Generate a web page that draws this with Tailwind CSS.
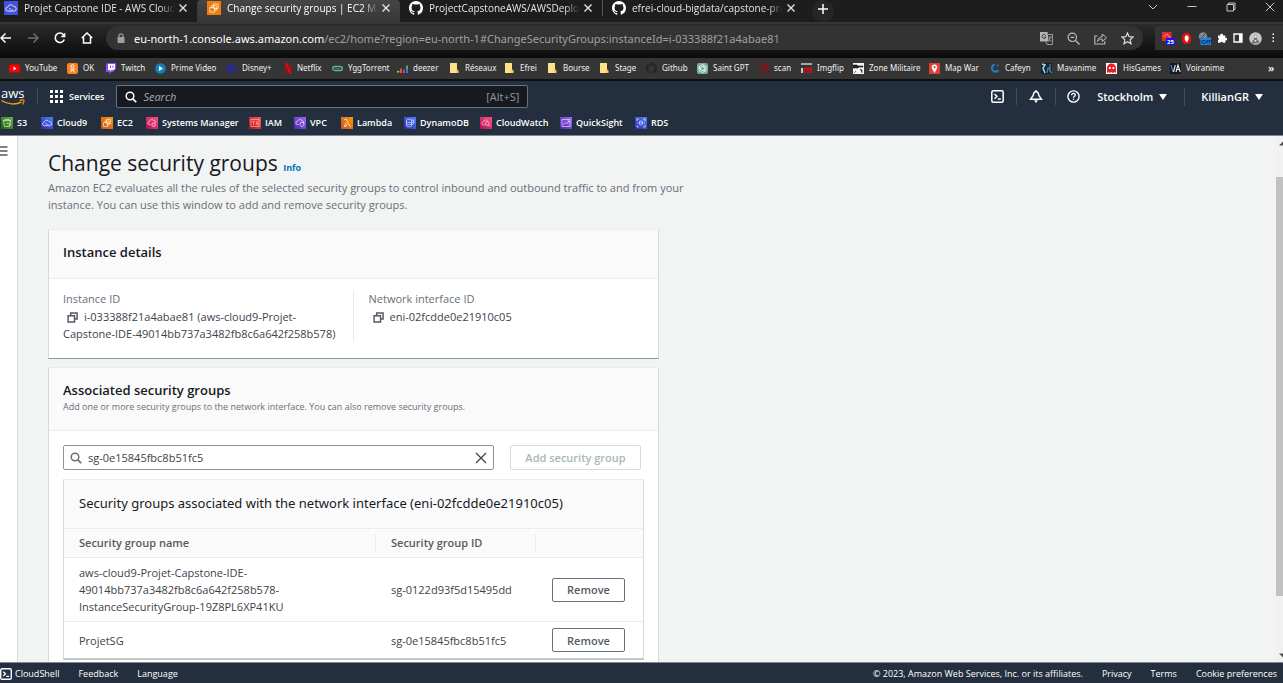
<!DOCTYPE html>
<html lang="en">
<head>
<meta charset="utf-8">
<meta name="viewport" content="width=device-width, initial-scale=1">
<title>Change security groups | EC2 Management Console</title>
<script src="https://cdn.jsdelivr.net/npm/@tailwindcss/browser@4"></script>
</head>
<body class="flex h-screen flex-col overflow-hidden bg-[#f2f3f3] font-['Open_Sans',sans-serif] text-[11px] leading-[17px] text-[#3c434b]">

<svg class="hidden" aria-hidden="true">
  <symbol id="x" viewBox="0 0 10 10"><path d="M1.5 1.5l7 7m0-7l-7 7" fill="none" stroke="currentColor" stroke-width="1.4"/></symbol>
  <symbol id="github" viewBox="0 0 16 16"><path fill="currentColor" d="M8 0C3.58 0 0 3.58 0 8c0 3.54 2.29 6.53 5.47 7.59.4.07.55-.17.55-.38 0-.19-.01-.82-.01-1.49-2.01.37-2.53-.49-2.69-.94-.09-.23-.48-.94-.82-1.13-.28-.15-.68-.52-.01-.53.63-.01 1.08.58 1.23.82.72 1.21 1.87.87 2.33.66.07-.52.28-.87.51-1.07-1.78-.2-3.64-.89-3.64-3.95 0-.87.31-1.59.82-2.15-.08-.2-.36-1.02.08-2.12 0 0 .67-.21 2.2.82.64-.18 1.32-.27 2-.27s1.36.09 2 .27c1.53-1.04 2.2-.82 2.2-.82.44 1.1.16 1.92.08 2.12.51.56.82 1.27.82 2.15 0 3.07-1.87 3.75-3.65 3.95.29.25.54.73.54 1.48 0 1.07-.01 1.93-.01 2.2 0 .21.15.46.55.38A8.01 8.01 0 0 0 16 8c0-4.42-3.58-8-8-8z"/></symbol>
  <symbol id="cloud9" viewBox="0 0 12 12"><path d="M3.3 8.7a1.7 1.7 0 0 1-.1-3.4A2.7 2.7 0 0 1 8.2 4.6 A2 2 0 0 1 8.7 8.7zM4.5 6l1 1-1 .9M6.2 7.7h1.3" fill="none" stroke="#fff" stroke-opacity=".85" stroke-width=".8"/></symbol>
  <symbol id="ec2" viewBox="0 0 12 12"><path d="M5.5 2.5h4v4h-4zM2.5 5.5h4v4h-4zM4 5.500V4h4v4H6.500" fill="none" stroke="#fff" stroke-opacity=".85" stroke-width=".7"/></symbol>
  <symbol id="folder" viewBox="0 0 10 10"><path d="M1 0h7v6.500l1.300 1V10H1z" fill="#ffe08a"/><path d="M7 10V8l1-1.500L9.300 7.500V10z" fill="#f2c94c"/></symbol>
  <symbol id="copy" viewBox="0 0 12 12"><path d="M4 3.500V1.200h7v6.500H8.700M1.200 4h7v7H1.200z" fill="none" stroke="currentColor" stroke-width="1.600"/></symbol>
  <symbol id="glass" viewBox="0 0 12 12"><circle cx="5" cy="5" r="3.800" fill="none" stroke="currentColor" stroke-width="1.500"/><path d="M7.800 7.800l3.400 3.400" stroke="currentColor" stroke-width="1.700"/></symbol>
  <symbol id="shell" viewBox="0 0 13 13"><rect x=".8" y=".8" width="11.400" height="11.400" rx="1.500" fill="none" stroke="currentColor" stroke-width="1.500"/><path d="M3.500 4l2.500 2.300-2.500 2.400M6.800 9h3" fill="none" stroke="currentColor" stroke-width="1.400"/></symbol>
</svg>

<!-- Browser tabs -->
<div class="flex h-[24px] shrink-0 items-start border-b-2 border-[#353535] bg-[#1d1d1d] text-[10px] text-[#e4e4e4]">
  <div class="flex h-[22px] w-[197px] shrink-0 items-start pt-[1px] pl-1">
    <svg class="size-[14px] bg-[#4152dc]"><use href="#cloud9"/></svg>
    <span class="ml-[6px] w-[151px] whitespace-nowrap leading-[14px] [mask-image:linear-gradient(to_right,#000_90%,transparent)]">Projet Capstone IDE - AWS Cloud</span>
    <button aria-label="Close tab" class="ml-[3px] mt-[2px]"><svg class="size-[10px]"><use href="#x"/></svg></button>
  </div>
  <div class="flex h-[24px] w-[203px] shrink-0 items-start rounded-t bg-linear-to-b from-[#464646] to-[#353535] pt-[1px] pl-[10px]">
    <svg class="size-[14px] bg-[#ee7d0c]"><use href="#ec2"/></svg>
    <span class="ml-[6px] w-[151px] whitespace-nowrap leading-[14px] text-white [mask-image:linear-gradient(to_right,#000_90%,transparent)]">Change security groups | EC2 Ma</span>
    <button aria-label="Close tab" class="ml-[3px] mt-[2px]"><svg class="size-[10px]"><use href="#x"/></svg></button>
  </div>
  <div class="flex h-[22px] w-[202px] shrink-0 items-start rounded-bl pt-[1px] pl-[9px]">
    <svg class="size-[14px] text-white"><use href="#github"/></svg>
    <span class="ml-[6px] w-[151px] whitespace-nowrap leading-[14px] [mask-image:linear-gradient(to_right,#000_90%,transparent)]">ProjectCapstoneAWS/AWSDeploy</span>
    <button aria-label="Close tab" class="ml-[3px] mt-[2px]"><svg class="size-[10px]"><use href="#x"/></svg></button>
  </div>
  <div class="flex h-[16px] w-[204px] shrink-0 items-start border-l border-[#555] pt-[1px] pl-[9px]">
    <svg class="size-[14px] text-white"><use href="#github"/></svg>
    <span class="ml-[6px] w-[151px] whitespace-nowrap leading-[14px] [mask-image:linear-gradient(to_right,#000_90%,transparent)]">efrei-cloud-bigdata/capstone-pro</span>
    <button aria-label="Close tab" class="ml-[3px] mt-[2px]"><svg class="size-[10px]"><use href="#x"/></svg></button>
  </div>
  <button aria-label="New tab" class="ml-[6px] flex size-[22px] items-center justify-center rounded-full bg-[#262626] pb-1 text-white"><svg class="size-[12px]" viewBox="0 0 12 12"><path d="M6 1v10M1 6h10" stroke="currentColor" stroke-width="1.500"/></svg></button>
  <div class="ml-auto flex items-center gap-[29px] pt-[2px] pr-2 text-[#c8c8c8]">
    <button aria-label="Search tabs"><svg class="size-[10px]" viewBox="0 0 10 10"><path d="M1 3l4 4 4-4" fill="none" stroke="currentColor"/></svg></button>
    <button aria-label="Minimize"><svg class="size-[10px]" viewBox="0 0 10 10"><path d="M.5 4.500h9" stroke="currentColor"/></svg></button>
    <button aria-label="Restore"><svg class="size-[10px]" viewBox="0 0 10 10"><path d="M1 2.500h6.500V9H1zM2.500 2.500V1H9v6.500H7.500" fill="none" stroke="currentColor"/></svg></button>
    <button aria-label="Close window"><svg class="size-[10px]" viewBox="0 0 10 10"><path d="M.8.8l8.400 8.400m0-8.400L.8 9.200" stroke="currentColor"/></svg></button>
  </div>
</div>

<!-- Address bar -->
<div class="flex h-[34px] shrink-0 items-start bg-linear-to-b from-[#2b2b2b] to-[#0b0b0b] pt-[2px]">
  <div class="flex h-[24px] w-[106px] shrink-0 items-center gap-[15px] text-white">
    <button aria-label="Back"><svg class="size-[12px]" viewBox="0 0 12 12"><path d="M11 6H1.500M5.500 1.500L1 6l4.500 4.500" fill="none" stroke="currentColor" stroke-width="1.500"/></svg></button>
    <button aria-label="Forward" class="text-[#6d6d6d]"><svg class="size-[12px]" viewBox="0 0 12 12"><path d="M1 6h9.500M6.500 1.500L11 6l-4.500 4.500" fill="none" stroke="currentColor" stroke-width="1.500"/></svg></button>
    <button aria-label="Reload"><svg class="size-[12px]" viewBox="0 0 12 12"><path d="M10.300 7.500A4.700 4.700 0 1 1 9.500 2.700" fill="none" stroke="currentColor" stroke-width="1.600"/><path d="M11.300.5v4.700H6.600z" fill="currentColor"/></svg></button>
    <button aria-label="Home"><svg class="size-[12px]" viewBox="0 0 12 12"><path d="M.8 6L6 1l5.200 5M2.500 5v6h7V5" fill="none" stroke="currentColor" stroke-width="1.500"/></svg></button>
  </div>
  <div class="flex h-[24px] flex-1 items-center rounded-full bg-[#333] pr-[9px] pl-[10px] text-[#a0a0a0]">
    <svg class="h-[10px] w-[10px] shrink-0" viewBox="0 0 10 10"><path d="M1.500 4h7v6h-7z" fill="currentColor"/><path d="M3 4.500V2.800a2 2 0 0 1 4 0v1.700" fill="none" stroke="currentColor" stroke-width="1.200"/></svg>
    <p class="ml-2 flex-1 overflow-hidden font-['Noto_Sans',sans-serif] text-[11px] whitespace-nowrap"><span class="text-white">eu-north-1.console.aws.amazon.com</span>/ec2/home?region=eu-north-1#ChangeSecurityGroups:instanceId=i-033388f21a4abae81</p>
    <div class="flex items-center gap-[14px] text-[#bdbdbd]">
      <button aria-label="Translate"><svg class="size-[13px]" viewBox="0 0 13 13"><path d="M0 0h7.500l1 9.500H0z" fill="#b5b5b5"/><path d="M8 2.500h4.500v10H7L6 10" fill="none" stroke="#a5a5a5" stroke-width=".9"/><path d="M5.800 3.400A2 2 0 1 0 6 5H4.200" fill="none" stroke="#333" stroke-width=".9"/><path d="M8.300 5.200h3.700M10 4.500c.3 3-.8 4.500-1.800 5M8.800 6.500c.5 1.400 1.500 2.300 2.700 2.800" fill="none" stroke="#bbb" stroke-width=".7"/></svg></button>
      <button aria-label="Zoom"><svg class="size-[13px]" viewBox="0 0 13 13"><circle cx="5.300" cy="5.300" r="4.200" fill="none" stroke="currentColor" stroke-width="1.200"/><path d="M8.500 8.500l4 4M3.500 5.300h3.700" stroke="currentColor" stroke-width="1.300"/></svg></button>
      <button aria-label="Share"><svg class="size-[13px]" viewBox="0 0 13 13"><path d="M3.500 4H.8v8h10V9" fill="none" stroke="currentColor" stroke-width="1.100"/><path d="M3.500 9.500c.3-3 2-4.600 4.700-4.600V2l4.300 3.800-4.300 3.700V7c-2 0-3.500.7-4.700 2.500z" fill="none" stroke="currentColor"/></svg></button>
      <button aria-label="Bookmark"><svg class="size-[13px]" viewBox="0 0 13 13"><path d="M6.500 1l1.600 3.700 4 .4-3 2.700.9 4-3.500-2.100L3 11.800l.9-4-3-2.700 4-.4z" fill="none" stroke="#ddd" stroke-width="1.200"/></svg></button>
    </div>
  </div>
  <div class="ml-[12px] flex h-[24px] w-[128px] shrink-0 items-center gap-[6px] bg-[#333] pl-[7px]">
    <button aria-label="Extension, 25 items"><svg class="size-[13px]" viewBox="0 0 13 13"><path d="M0 0h9.500v9H0z" fill="#e22b2b"/><path d="M1.500 5l3-3 3.500 3-2 3" fill="none" stroke="#ff9d9d"/><rect x="4" y="6" width="9" height="7" fill="#1414ee"/><text x="5" y="12" font-size="6" font-weight="bold" fill="#fff">25</text></svg></button>
    <button aria-label="Ad blocker"><svg class="size-[11px]" viewBox="0 0 11 11"><path d="M3.500 0h4L10 3v5l-2.500 3h-4L1 8V3z" fill="#e80d0d"/><path d="M3.800 3.500v3.500l1.500 2h1l1.300-3V3l-1 1V2l-1.300.5v-.3z" fill="#fff"/></svg></button>
    <button aria-label="Extension off"><svg class="size-[13px]" viewBox="0 0 13 13"><circle cx="5" cy="4.500" r="4.200" fill="#8a8a8a"/><path d="M2 7l5-5" stroke="#444"/><rect x="2.500" y="5.500" width="10.500" height="7.500" fill="#1e88e5"/><text x="3.200" y="11.500" font-size="6" font-weight="bold" fill="#0b2b4b">Off</text></svg></button>
    <button aria-label="Extensions"><svg class="size-[10px]" viewBox="0 0 10 10"><path d="M1 2.500h2.300a1.400 1.400 0 1 1 2.700 0h2.300v2.300a1.400 1.400 0 1 1 0 2.700V9.700H6a1.400 1.400 0 0 0-2.700 0H1V7.400a1.400 1.400 0 0 0 0-2.600z" fill="#fff"/></svg></button>
    <button aria-label="Side panel"><svg class="size-[10px]" viewBox="0 0 10 10"><path d="M1 1h8v8H1z" fill="none" stroke="#fff" stroke-width="1.300"/><path d="M6 1h3v8H6z" fill="#fff"/></svg></button>
    <button aria-label="Profile"><svg class="size-[13px]" viewBox="0 0 13 13"><circle cx="6.500" cy="6.500" r="6.300" fill="#c9c9c9"/><path d="M2.500 12c0-3 1.500-4 2.500-4.500V4c0-1.800 3-1.800 3 0v3.500c1.500.3 2.500 1.500 2 3.500z" fill="#777"/><path d="M5.500 8l1 2 1-2z" fill="#eee"/><circle cx="6.500" cy="4.500" r="1.300" fill="#eee"/></svg></button>
    <button aria-label="Menu" class="text-white"><svg class="h-[12px] w-[10px]" viewBox="0 0 10 12"><path d="M4.500 1.500h1.500v1.500H4.500zM4.500 5h1.500v1.500H4.500zM4.500 8.500h1.500v1.500H4.500z" fill="currentColor"/></svg></button>
  </div>
</div>

<!-- Bookmarks -->
<nav aria-label="Bookmarks" class="grid h-[21px] shrink-0 grid-cols-[58px_38px_50px_71px_57px_49px_65px_52px_55px_43px_52px_47px_51px_62px_42px_52px_76px_61px_51px_65px_64px_1fr_15px] items-center bg-[#353535] pb-[1px] pl-[9px] font-['Noto_Sans',sans-serif] text-[8px] leading-[12px] whitespace-nowrap text-[#f0f0f0]">
  <a href="#" class="flex items-center gap-[5px]"><svg class="size-[11px]" viewBox="0 0 11 11"><rect y="1.500" width="11" height="8" rx="2" fill="#f00"/><path d="M4.500 3.500v4L7.500 5.500z" fill="#fff"/></svg>YouTube</a>
  <a href="#" class="flex items-center gap-[5px]"><svg class="size-[11px]" viewBox="0 0 11 11"><rect width="11" height="11" rx="2" fill="#f7831c"/><circle cx="5.500" cy="3.300" r="1.500" fill="none" stroke="#fff"/><path d="M3 5.800c1.500 1 3.500 1 5 0M5.500 6.500L3.500 9.300M5.500 6.500l2 2.800" fill="none" stroke="#fff"/></svg>OK</a>
  <a href="#" class="flex items-center gap-[5px]"><svg class="size-[11px]" viewBox="0 0 11 11"><path d="M2 0h9v6L8 9H6l-2 2V9H1V2z" fill="#9146ff"/><path d="M3 1h7v4.500L8.500 7H6.500L5 8.500V7H3z" fill="#fff"/><path d="M5.500 2.500v2.500M8 2.500v2.500" stroke="#9146ff"/></svg>Twitch</a>
  <a href="#" class="flex items-center gap-[5px]"><svg class="size-[11px]" viewBox="0 0 11 11"><circle cx="5.500" cy="5.500" r="5.300" fill="#1380b8"/><path d="M4 3v5l4-2.500z" fill="#fff"/></svg>Prime Video</a>
  <a href="#" class="flex items-center gap-[5px]"><svg class="size-[11px]" viewBox="0 0 11 11"><path d="M1 2.500c5-2 9.500 0 9 3.500-.5 3.500-5 4-7 2.500s2-2.500 5-2M0 5h5M3.500 4v6" fill="none" stroke="#2226c9" stroke-width="1.200"/></svg>Disney+</a>
  <a href="#" class="flex items-center gap-[3px]"><svg class="size-[11px]" viewBox="0 0 11 11"><path d="M2 0h2v11H2zM6.500 0h2v11h-2z" fill="#a90d14"/><path d="M2 0h2l4.500 11h-2z" fill="#e50914"/></svg>Netflix</a>
  <a href="#" class="flex items-center gap-[5px]"><svg class="size-[11px]" viewBox="0 0 11 11"><rect x=".7" y="3.500" width="9.600" height="4" rx="2" fill="none" stroke="#62b59a" stroke-width="1.300"/><path d="M3 5.500h5" stroke="#2b7c68"/></svg>YggTorrent</a>
  <a href="#" class="flex items-center gap-[5px]"><svg class="size-[11px]" viewBox="0 0 11 11"><path d="M0 8h2.300v1.500H0z" fill="#f5b82e"/><path d="M3 5.500h2V10H3z" fill="#e2582c"/><path d="M6 6.500h2V10H6z" fill="#b53bb5"/><path d="M9 2.500h2V6H9z" fill="#3ab66b"/><path d="M9 6h2v4H9z" fill="#3b75d6"/></svg>deezer</a>
  <a href="#" class="flex items-center gap-[6px]"><svg class="size-[10px]"><use href="#folder"/></svg>Réseaux</a>
  <a href="#" class="flex items-center gap-[6px]"><svg class="size-[10px]"><use href="#folder"/></svg>Efrei</a>
  <a href="#" class="flex items-center gap-[6px]"><svg class="size-[10px]"><use href="#folder"/></svg>Bourse</a>
  <a href="#" class="flex items-center gap-[6px]"><svg class="size-[10px]"><use href="#folder"/></svg>Stage</a>
  <a href="#" class="flex items-center gap-[5px]"><svg class="size-[11px] text-[#22262b]"><use href="#github"/></svg>Github</a>
  <a href="#" class="flex items-center gap-[5px]"><svg class="size-[11px]" viewBox="0 0 11 11"><rect width="11" height="11" rx="2" fill="#75ac9d"/><path d="M5.500 1.500L9 3.500v4l-3.500 2L2 7.500v-4zM5.500 3.500l2 1v2l-2 1-2-1v-2zM5.500 1.500l2 3M9 7.500l-3.500 0M2 3.500l1.500 3" fill="none" stroke="#fff" stroke-width=".7"/></svg>Saint GPT</a>
  <a href="#" class="flex items-center gap-[5px]"><svg class="size-[10px]" viewBox="0 0 10 10"><path d="M1 1h3.500v6.500L3 9.500 0 8M9.500 1.500H6v3h3v4.500H5.500" fill="none" stroke="#8b1015" stroke-width="1.500"/></svg>scan</a>
  <a href="#" class="flex items-center gap-[5px]"><svg class="size-[11px]" viewBox="0 0 11 11"><path d="M0 1h11" stroke="#ccc" stroke-width="1.500"/><path d="M1 5v5" stroke="#eee" stroke-width="1.600"/><path d="M3.500 10V5.500h6.700V10M7 5.500V10" fill="none" stroke="#e30b0b" stroke-width="1.700"/></svg>Imgflip</a>
  <a href="#" class="flex items-center gap-[5px]"><svg class="size-[11px]" viewBox="0 0 11 11"><path d="M0 0h11v11H0z" fill="#f4f4f4"/><path d="M0 2h4l1 1h5v1H6L5 5H0zM7 6l2 1v3M1 10l2-2" fill="#222" stroke="#222" stroke-width=".6"/></svg>Zone Militaire</a>
  <a href="#" class="flex items-center gap-[5px]"><svg class="size-[11px]" viewBox="0 0 11 11"><path d="M0 0h11v11H0z" fill="#de4036"/><path d="M5.500 10L3 5.500a2.800 2.800 0 1 1 5 0z" fill="#fff"/><circle cx="5.500" cy="4.200" r="1.100" fill="#de4036"/></svg>Map War</a>
  <a href="#" class="flex items-center gap-[5px]"><svg class="size-[10px]" viewBox="0 0 10 10"><path d="M5 1.500a3.600 3.600 0 1 0 3.500 5.500" fill="none" stroke="#1b80b6" stroke-width="2.200"/><circle cx="7.800" cy="2.500" r="1.100" fill="#1b80b6"/></svg>Cafeyn</a>
  <a href="#" class="flex items-center gap-[5px]"><svg class="size-[11px]" viewBox="0 0 11 11"><path d="M0 0h11v11H0z" fill="#16242d"/><path d="M1 1l3 1-2 3 2 5" fill="none" stroke="#a9d6ed" stroke-width="1.500"/><path d="M6 10l1-5 2 1V1M8 7l3 3" fill="none" stroke="#4b8fb5" stroke-width="1.200"/></svg>Mavanime</a>
  <a href="#" class="flex items-center gap-[6px]"><svg class="size-[11px]" viewBox="0 0 11 11"><path d="M0 0h11v11H0z" fill="#fff"/><path d="M1 10V5a4.500 4.500 0 0 1 9 0v5L8.500 9 7 10 5.500 9 4 10 2.500 9z" fill="#ee1c25"/><path d="M3 4h1.800v2H3zM6.500 4h1.800v2H6.500z" fill="#fff"/></svg>HisGames</a>
  <a href="#" class="flex items-center gap-[5px]"><svg class="size-[11px]" viewBox="0 0 11 11"><path d="M0 0h11v11H0z" fill="#14161d"/><path d="M1 2l2 7" stroke="#4a6fe8" stroke-width="1.300"/><path d="M3.500 9L5.300 2M6 9l2-7 2.200 7M7 6.500h2.500" fill="none" stroke="#eee" stroke-width="1.100"/></svg>Voiranime</a>
  <button aria-label="More bookmarks" class="text-left text-[11px] font-semibold">»</button>
</nav>

<!-- AWS header -->
<header class="shrink-0 border-t-2 border-b border-t-[#101010] border-b-[#7d8692] bg-[#232f3e] text-[9px] font-semibold text-white">
  <div class="flex h-[31px] items-center">
    <a href="#" aria-label="AWS home" class="w-[37px]"><svg class="h-[22px] w-[25px]" viewBox="0 0 25 22"><text x="1" y="12" font-size="13" font-weight="500" fill="#fff">aws</text><path d="M1.500 14.500c6 4 14 4.500 20 1.500" fill="none" stroke="#f90" stroke-width="1.500"/><path d="M19.500 14.500c2-1 5-1 4.500.5s-.8 2.500-1.500 3.500" fill="none" stroke="#f90" stroke-width="1.200"/></svg></a>
    <button class="flex h-[17px] items-center gap-[6px] border-l border-[#414d5c] pl-3"><svg class="size-[13px]" viewBox="0 0 13 13"><path d="M0 0h3v3H0zM5 0h3v3H5zM10 0h3v3h-3zM0 5h3v3H0zM5 5h3v3H5zM10 5h3v3h-3zM0 10h3v3H0zM5 10h3v3H5zM10 10h3v3h-3z" fill="currentColor"/></svg>Services</button>
    <label class="ml-3 flex h-[23px] w-[412px] items-center rounded-[2px] border border-[#68747e] bg-[#161a20] px-2 text-[11px] font-normal">
      <svg class="size-[12px] shrink-0"><use href="#glass"/></svg>
      <input type="search" aria-label="Search" placeholder="Search" class="ml-[6px] min-w-0 flex-1 bg-transparent outline-none placeholder:text-[#a2abb0] placeholder:italic">
      <span class="text-[#8d9aa0]">[Alt+S]</span>
    </label>
    <div class="ml-auto flex items-center text-[11px]">
      <button aria-label="CloudShell" class="mr-3"><svg class="size-[13px]"><use href="#shell"/></svg></button>
      <button aria-label="Notifications" class="flex h-[17px] items-center border-x border-[#414d5c] px-3"><svg class="h-[13px] w-[14px]" viewBox="0 0 14 13"><path d="M7 1.500C4.500 2 4.300 4 4.200 5.500L1.500 9.300h11L9.800 5.500C9.700 4 9.500 2 7 1.500z" fill="none" stroke="currentColor" stroke-width="1.400"/><path d="M5 10.300h4L7 13zM6.300 0h1.400v2H6.300z" fill="currentColor"/></svg></button>
      <button aria-label="Help" class="ml-[11px]"><svg class="size-[13px]" viewBox="0 0 13 13"><circle cx="6.500" cy="6.500" r="5.600" fill="none" stroke="currentColor" stroke-width="1.400"/><path d="M4.700 5.200c0-2.400 3.700-2.300 3.600-.1 0 1.300-1.800 1.200-1.800 2.700M6.500 8.700v1.400" fill="none" stroke="currentColor" stroke-width="1.300"/></svg></button>
      <button class="ml-[17px] flex items-center gap-[6px]">Stockholm <svg class="h-[6px] w-[8px]" viewBox="0 0 8 6"><path d="M0 0h8L4 6z" fill="currentColor"/></svg></button>
      <button class="mr-5 ml-[17px] flex h-[18px] items-center gap-[6px] border-l border-[#414d5c] pl-4">KillianGR <svg class="h-[6px] w-[8px]" viewBox="0 0 8 6"><path d="M0 0h8L4 6z" fill="currentColor"/></svg></button>
    </div>
  </div>
  <nav aria-label="Favorites" class="grid h-[23px] grid-cols-[40px_60px_45px_103px_45px_47px_63px_76px_80px_75px_1fr] items-center pb-[2px] pl-[1px] whitespace-nowrap">
    <a href="#" class="flex items-center gap-1"><svg class="size-[12px] bg-linear-to-tr from-[#1b660f] to-[#6cae3e]" viewBox="0 0 12 12"><path d="M2.500 3.500h7l-.8 6H3.500zM2.500 3.500c1-1.500 6-1.500 7 0M5.500 6l4.500 2" fill="none" stroke="#fff" stroke-opacity=".85" stroke-width=".7"/></svg>S3</a>
    <a href="#" class="flex items-center gap-1"><svg class="size-[12px] bg-linear-to-tr from-[#2e27ad] to-[#527fff]"><use href="#cloud9"/></svg>Cloud9</a>
    <a href="#" class="flex items-center gap-1"><svg class="size-[12px] bg-linear-to-tr from-[#c8511b] to-[#f90]"><use href="#ec2"/></svg>EC2</a>
    <a href="#" class="flex items-center gap-1"><svg class="size-[12px] bg-linear-to-tr from-[#b0084d] to-[#ff4f8b]" viewBox="0 0 12 12"><path d="M4.500 7.500H3.300a1.500 1.500 0 0 1 0-3C4 2 7.500 2 8 4c1.500 0 2 1 1.500 2" fill="none" stroke="#fff" stroke-opacity=".85" stroke-width=".7"/><circle cx="7.500" cy="7.800" r="1.700" fill="none" stroke="#fff" stroke-opacity=".85" stroke-width=".8"/></svg>Systems Manager</a>
    <a href="#" class="flex items-center gap-1"><svg class="size-[12px] bg-linear-to-tr from-[#bd0816] to-[#ff5252]" viewBox="0 0 12 12"><path d="M2 2.500h8v7H2zM3.500 4.500h2M4.500 4.500v3.500M7 8l1-3.500L9 8" fill="none" stroke="#fff" stroke-opacity=".75" stroke-width=".6"/></svg>IAM</a>
    <a href="#" class="flex items-center gap-1"><svg class="size-[12px] bg-linear-to-tr from-[#4d27a8] to-[#a166ff]" viewBox="0 0 12 12"><path d="M4.500 7.500H3.300a1.500 1.500 0 0 1 0-3C4 2 7.500 2 8 4c1.500 0 2 1 1.500 2M6 6l2-.7 2 .7c0 2-.8 3-2 4-1.200-1-2-2-2-4z" fill="none" stroke="#fff" stroke-opacity=".85" stroke-width=".7"/></svg>VPC</a>
    <a href="#" class="flex items-center gap-1"><svg class="size-[12px] bg-linear-to-tr from-[#c8511b] to-[#f90]" viewBox="0 0 12 12"><path d="M3.500 2.500H5.500L8.800 9.300H10M5.300 5.500L3 9.500h1.800L6.300 7" fill="none" stroke="#fff" stroke-opacity=".9" stroke-width=".8"/></svg>Lambda</a>
    <a href="#" class="flex items-center gap-1"><svg class="size-[12px] bg-linear-to-tr from-[#2e27ad] to-[#527fff]" viewBox="0 0 12 12"><path d="M2.500 3c0-1 5-1 5 0v6c0 1-5 1-5 0zM2.500 5c1 .8 4 .8 5 0M2.500 7c1 .8 4 .8 5 0M8 3h2L9 5.500h1L8 8" fill="none" stroke="#fff" stroke-opacity=".85" stroke-width=".7"/></svg>DynamoDB</a>
    <a href="#" class="flex items-center gap-1"><svg class="size-[12px] bg-linear-to-tr from-[#b0084d] to-[#ff4f8b]" viewBox="0 0 12 12"><path d="M5 8H3.500a1.600 1.600 0 0 1 0-3.200C4 2.500 7 2.500 7.800 4.300" fill="none" stroke="#fff" stroke-opacity=".85" stroke-width=".7"/><circle cx="7.200" cy="6.500" r="1.800" fill="none" stroke="#fff" stroke-opacity=".85" stroke-width=".7"/><path d="M8.500 7.800l1.700 1.700" stroke="#fff" stroke-opacity=".85" stroke-width=".8"/></svg>CloudWatch</a>
    <a href="#" class="flex items-center gap-1"><svg class="size-[12px] bg-linear-to-tr from-[#4d27a8] to-[#a166ff]" viewBox="0 0 12 12"><path d="M2 2.500h8v7H2zM3 8l2-2.500L6.500 7 9 4M7.500 4H9v1.500" fill="none" stroke="#fff" stroke-opacity=".8" stroke-width=".7"/></svg>QuickSight</a>
    <a href="#" class="flex items-center gap-1"><svg class="size-[12px] bg-linear-to-tr from-[#2e27ad] to-[#527fff]" viewBox="0 0 12 12"><path d="M2 4V2h2M8 2h2v2M10 8v2H8M4 10H2V8M4.500 4.500c0-.7 3-.7 3 0v3c0 .7-3 .7-3 0zM4.500 5.500c.7.500 2.300.5 3 0M2 6h1.500M8.500 6H10" fill="none" stroke="#fff" stroke-opacity=".85" stroke-width=".7"/></svg>RDS</a>
  </nav>
</header>

<!-- Page -->
<div class="flex min-h-0 flex-1">
  <aside class="w-[18px] shrink-0 border-r border-[#d5dbdb] bg-white pt-[10px]">
    <button aria-label="Open navigation" class="block"><svg class="h-[10px] w-[8px]" viewBox="0 0 8 10"><path d="M0 1h7.500M0 5h7.500M0 9h7.500" stroke="#545b64" stroke-width="1.300"/></svg></button>
  </aside>
  <main class="min-w-0 flex-1 overflow-hidden pt-[13px] pl-[30px]">
    <div class="max-w-[611px]">
      <h1 class="text-[21px] leading-[28px] text-[#16191f]">Change security groups <a href="#" class="text-[9px] leading-none font-bold text-[#0073bb]">Info</a></h1>
      <p class="mt-[2px] whitespace-nowrap text-[#687078]">Amazon EC2 evaluates all the rules of the selected security groups to control inbound and outbound traffic to and from your<br>instance. You can use this window to add and remove security groups.</p>

      <section class="mt-4 border border-x-[#d5dbdb] border-t-[#eaeded] border-b-[#8d999b] bg-white">
        <h2 class="border-b border-[#eaeded] bg-[#fafafa] px-[14px] pt-[13px] pb-[17px] text-[13px] leading-[18px] font-semibold text-[#16191f]">Instance details</h2>
        <dl class="grid grid-cols-2 px-[14px] pt-[11px] pb-4">
          <div class="border-r border-[#eaeded] pr-2">
            <dt class="text-[#687078]">Instance ID</dt>
            <dd class="mt-[1px]"><button aria-label="Copy instance ID" class="mr-[6px] ml-1 align-[-2px] leading-none text-[#545b64]"><svg class="size-[11px]"><use href="#copy"/></svg></button>i-033388f21a4abae81 (aws-cloud9-Projet-Capstone-IDE-49014bb737a3482fb8c6a642f258b578)</dd>
          </div>
          <div class="pl-[15px]">
            <dt class="text-[#687078]">Network interface ID</dt>
            <dd class="mt-[1px]"><button aria-label="Copy network interface ID" class="mr-[6px] ml-1 align-[-2px] leading-none text-[#545b64]"><svg class="size-[11px]"><use href="#copy"/></svg></button>eni-02fcdde0e21910c05</dd>
          </div>
        </dl>
      </section>

      <section class="mt-[8px] border border-x-[#d5dbdb] border-t-[#eaeded] bg-white pb-5">
        <div class="border-b border-[#eaeded] bg-[#fafafa] px-[14px] pt-[13px] pb-4">
          <h2 class="text-[13px] leading-[18px] font-semibold text-[#16191f]">Associated security groups</h2>
          <p class="text-[9px] leading-[15px] text-[#687078]">Add one or more security groups to the network interface. You can also remove security groups.</p>
        </div>
        <div class="px-[14px] pt-[14px]">
          <div class="flex gap-4">
            <label class="flex h-[25px] flex-1 items-center rounded-[2px] border border-[#879596] px-[6px]">
              <svg class="size-[12px] shrink-0 text-[#687078]"><use href="#glass"/></svg>
              <input type="text" aria-label="Security group" value="sg-0e15845fbc8b51fc5" class="ml-[6px] min-w-0 flex-1 text-[#3c434b] outline-none">
              <button aria-label="Clear"><svg class="size-[12px] text-[#414750]" viewBox="0 0 12 12"><path d="M1 1l10 10M11 1L1 11" stroke="currentColor" stroke-width="1.400"/></svg></button>
            </label>
            <button disabled class="mr-[3px] h-[25px] w-[131px] rounded-[2px] border border-[#d5dbdb] font-semibold text-[#aab7b8]">Add security group</button>
          </div>
          <div class="mt-[9px] border border-x-[#d5dbdb] border-t-[#eaeded] border-b-2 border-b-[#c3c8cb] bg-white">
            <h3 class="border-b border-[#eaeded] bg-[#fafafa] px-[15px] pt-[13px] pb-[15px] font-['Noto_Sans',sans-serif] text-[13px] leading-[20px] text-[#16191f]">Security groups associated with the network interface (eni-02fcdde0e21910c05)</h3>
            <table class="w-full table-fixed border-collapse text-left">
              <colgroup><col><col class="w-[160px]"><col class="w-[107px]"></colgroup>
              <thead class="bg-[#fafafa] text-[#545b64]">
                <tr class="border-b border-[#eaeded]">
                  <th scope="col" class="pt-[5px] pb-[6px] pl-[15px] font-semibold"><div class="border-r border-[#eaeded]">Security group name</div></th>
                  <th scope="col" class="pt-[5px] pb-[6px] pl-[15px] font-semibold"><div class="border-r border-[#eaeded]">Security group ID</div></th>
                  <th scope="col" aria-label="Actions"></th>
                </tr>
              </thead>
              <tbody>
                <tr class="border-b border-[#eaeded]">
                  <td class="py-[6px] pr-20 pl-[15px] break-words">aws-cloud9-Projet-Capstone-IDE-49014bb737a3482fb8c6a642f258b578-InstanceSecurityGroup-19Z8PL6XP41KU</td>
                  <td class="pl-[15px]">sg-0122d93f5d15495dd</td>
                  <td class="py-[6px] pl-4"><button class="block h-[24px] w-[73px] rounded-[2px] border border-[#687078] font-semibold text-[#545b64]">Remove</button></td>
                </tr>
                <tr>
                  <td class="py-[6px] pl-[15px]">ProjetSG</td>
                  <td class="pl-[15px]">sg-0e15845fbc8b51fc5</td>
                  <td class="py-[6px] pl-4"><button class="block h-[24px] w-[73px] rounded-[2px] border border-[#687078] font-semibold text-[#545b64]">Remove</button></td>
                </tr>
              </tbody>
            </table>
          </div>
        </div>
      </section>
    </div>
  </main>
  <div class="flex w-[7px] shrink-0 flex-col overflow-hidden bg-[#f1f1f1]" aria-hidden="true">
    <svg class="mt-[5px] ml-[3px] h-[5px] w-[8px] shrink-0" viewBox="0 0 8 5"><path d="M0 4.500L4 .5l4 4z" fill="#505050"/></svg>
    <div class="mt-[31px] h-[419px] bg-[#c1c1c1]"></div>
    <svg class="mt-auto mb-[4px] ml-[3px] h-[5px] w-[8px] shrink-0" viewBox="0 0 8 5"><path d="M0 .5L4 4.500l4-4z" fill="#505050"/></svg>
  </div>
</div>

<footer class="flex h-[21px] shrink-0 items-center gap-[19px] border-t border-[#7d8692] bg-[#232f3e] pt-[1px] pr-[6px] text-[9px] font-medium whitespace-nowrap text-white">
  <button class="flex items-center gap-[3px]"><svg class="size-[12px]"><use href="#shell"/></svg>CloudShell</button>
  <a href="#">Feedback</a>
  <button>Language</button>
  <span class="ml-auto">© 2023, Amazon Web Services, Inc. or its affiliates.</span>
  <a href="#">Privacy</a>
  <a href="#">Terms</a>
  <a href="#">Cookie preferences</a>
</footer>
</body>
</html>
